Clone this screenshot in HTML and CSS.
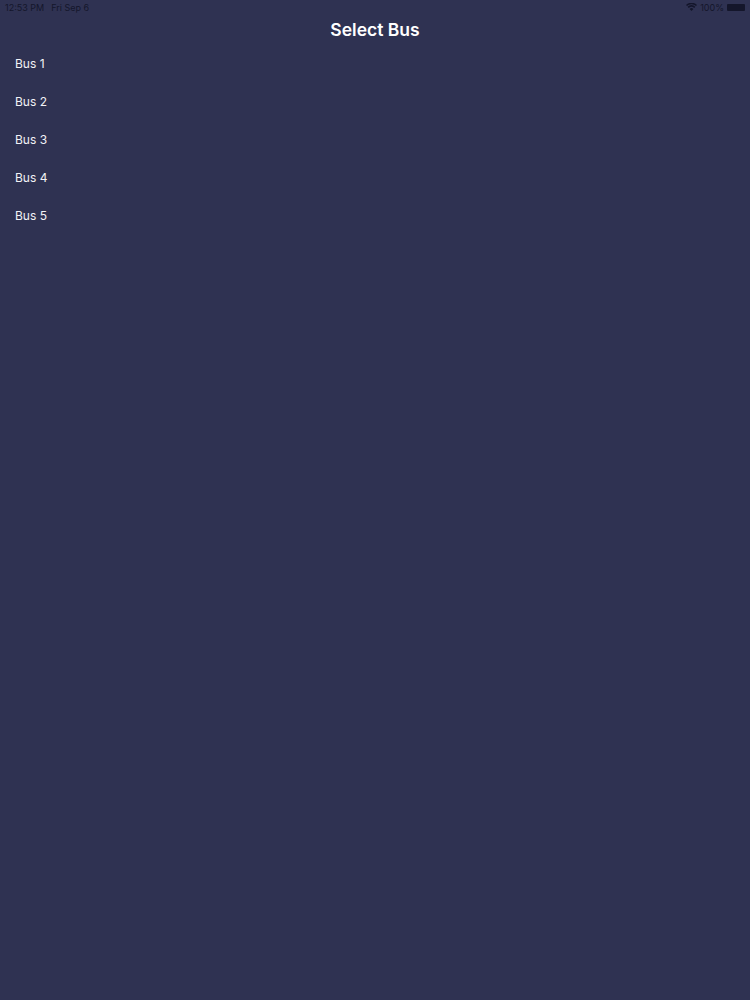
FILE: index.html
```html
<html>
	<head>
		<meta charset="utf-8" />
		<title>Select Bus</title>
		<link rel="stylesheet" href="styles.css">
	</head>
	<body>
		<div class="statusbar">
			<div class="status-left">
				<span>12:53 PM</span>
				<span>Fri Sep 6</span>
			</div>
			<div class="status-right">
				<svg class="wifi" width="11" height="8" viewBox="0 0 11 8">
					<path d="M5.5 8 L3.6 5.9 A2.8 2.8 0 0 1 7.4 5.9 Z" />
					<path d="M2.8 5 L1.6 3.7 A5.6 5.6 0 0 1 9.4 3.7 L8.2 5 A3.9 3.9 0 0 0 2.8 5 Z" />
					<path d="M1 3 L0 1.9 A8 8 0 0 1 11 1.9 L10 3 A6.6 6.6 0 0 0 1 3 Z" />
				</svg>
				<span>100%</span>
				<div class="battery"></div>
			</div>
		</div>
		<div class="title">Select Bus</div>
		<div class="list">
			<div class="item">Bus 1</div>
			<div class="item">Bus 2</div>
			<div class="item">Bus 3</div>
			<div class="item">Bus 4</div>
			<div class="item">Bus 5</div>
		</div>
	</body>
</html>
```
FILE: styles.css
```css
body{
	margin: 0;
	height: 1000px;
	overflow: hidden;
	background: #2f3252;
	font-family: Inter, "Liberation Sans", sans-serif;
	color: #fff;
}
.statusbar{
	height: 14px;
	padding: 0 5px;
	display: flex;
	justify-content: space-between;
	align-items: center;
	font-size: 9px;
	color: #14162b;
}
.status-left{
	display: flex;
	gap: 7px;
}
.status-right{
	display: flex;
	align-items: center;
	gap: 3px;
}
.wifi{
	fill: #14162b;
}
.battery{
	width: 18px;
	height: 7px;
	background: #14162b;
	border-radius: 1px;
}
.title{
	height: 32px;
	line-height: 32px;
	text-align: center;
	font-size: 17.5px;
	font-weight: 600;
}
.list{
	display: flex;
	flex-direction: column;
	margin-top: -1px;
}
.item{
	height: 38px;
	line-height: 38px;
	padding-left: 15px;
	font-size: 12px;
	color: #f2f2f6;
}
```
